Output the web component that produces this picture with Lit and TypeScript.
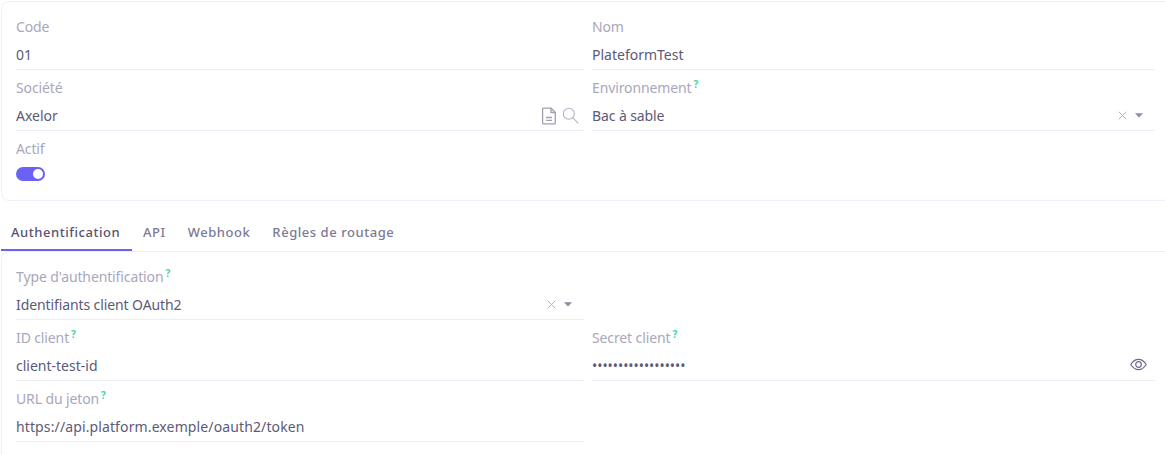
import { LitElement, html, css, nothing } from "lit";
import { customElement } from "lit/decorators.js";

const help = html`<sup class="help">?</sup>`;
const clearAndCaret = html`<span class="icons sel">
  <svg class="x" width="9" height="9" viewBox="0 0 9 9"><path d="M.7.7l7.6 7.6M8.3.7L.7 8.3" stroke="#b5b3c6" stroke-width="1" fill="none"/></svg>
  <svg class="caret" width="8" height="5" viewBox="0 0 8 5"><path d="M0 .3h8L4 4.6z" fill="#8e8ca6"/></svg>
</span>`;

@customElement("app-root")
export class AppRoot extends LitElement {
  static styles = css`
    :host {
      display: block;
      width: 1165px;
      height: 455px;
      overflow: hidden;
      background: #fff;
      font-family: "Noto Sans", "Open Sans", sans-serif;
      font-size: 14px;
      color: #5c5a78;
      box-sizing: border-box;
      padding-top: 1px;
      padding-left: 1px;
    }
    .card {
      border: 1px solid #f1f0fa;
      border-right: none;
      border-radius: 8px 0 0 8px;
      padding: 15px 10px 0 14px;
      display: grid;
      grid-template-columns: 568px 1fr;
      column-gap: 8px;
      row-gap: 8px;
      align-content: start;
    }
    .top { height: 200px; box-sizing: border-box; }
    .bottom { height: 210px; box-sizing: border-box; border-bottom: none; border-radius: 8px 0 0 0; }
    .field { display: flex; flex-direction: column; min-width: 0; }
    .label {
      height: 20px;
      line-height: 20px;
      color: #a9a7bb;
      margin-bottom: 1px;
      white-space: nowrap;
      letter-spacing: -0.12px;
    }
    .help { color: #45d6a4; font-size: 10px; font-weight: 700; line-height: 0; margin-left: 2px; vertical-align: 5px; letter-spacing: 0; }
    .value {
      height: 32px;
      box-sizing: border-box;
      border-bottom: 1px solid #eeedf8;
      display: flex;
      align-items: center;
      justify-content: space-between;
      line-height: 31px;
      padding-top: 2px;
      white-space: nowrap;
    }
    .icons { display: flex; align-items: center; }
    .ref { gap: 5px; margin-right: 5px; }
    .sel { gap: 8px; margin-right: 12px; }
    .eye { margin-right: 8px; margin-top: -2px; }
    .dots { font-size: 13.8px; color: #5c5a78; }
    .url { letter-spacing: 0.12px; }
    .tight { letter-spacing: -0.1px; }
    .toggle {
      width: 29px;
      height: 14px;
      margin-top: 7px;
      border-radius: 7px;
      background: #6a62f5;
      display: flex;
      align-items: center;
      justify-content: flex-end;
      padding-right: 2px;
      box-sizing: border-box;
    }
    .knob { width: 10px; height: 10px; border-radius: 50%; background: #fff; }
    .tabs { display: flex; height: 50px; box-sizing: border-box; font-size: 13px; }
    .tab {
      padding: 0 11px;
      line-height: 62px;
      height: 50px;
      box-sizing: border-box;
      color: #7c7a94;
      font-weight: 500;
      letter-spacing: 0.55px;
      white-space: nowrap;
    }
    .tab.active {
      color: #55536f;
      width: 131px;
      border-bottom: 2px solid #6a62f5;
      padding-left: 10px;
    }
  `;

  private field(label: string, value: unknown, hasHelp = false, icons: unknown = nothing) {
    return html`<div class="field">
      <div class="label">${label}${hasHelp ? help : nothing}</div>
      <div class="value"><span>${value}</span>${icons}</div>
    </div>`;
  }

  render() {
    const refIcons = html`<span class="icons ref">
      <svg width="16" height="18" viewBox="0 0 16 18" fill="none" stroke="#a09eb4" stroke-width="1.3"><path d="M2.5 1.2h7.5l4.3 4.3v10.5a.9.9 0 0 1-.9.9H2.5a.9.9 0 0 1-.9-.9V2.1a.9.9 0 0 1 .9-.9z"/><path d="M10 1.2v4.3h4.3M5 10.5h6M5 13.3h6"/></svg>
      <svg width="17" height="17" viewBox="0 0 17 17" fill="none" stroke="#b3b1c3" stroke-width="1.1"><circle cx="6.8" cy="6.8" r="5.5"/><path d="M10.7 10.7l5.6 5.6"/></svg>
    </span>`;
    const eye = html`<span class="icons eye"><svg width="17" height="13" viewBox="0 0 17 13" fill="none" stroke="#6d6b86" stroke-width="1.2"><path d="M.8 6.5C3 3 5.5 1.3 8.5 1.3S14 3 16.2 6.5C14 10 11.5 11.7 8.5 11.7S3 10 .8 6.5z"/><circle cx="8.5" cy="6.5" r="2.8"/></svg></span>`;
    return html`
      <section class="card top">
        ${this.field("Code", "01")}
        ${this.field("Nom", "PlateformTest")}
        ${this.field("Société", "Axelor", false, refIcons)}
        ${this.field("Environnement", html`<span class="tight">Bac à sable</span>`, true, clearAndCaret)}
        <div class="field">
          <div class="label">Actif</div>
          <div class="toggle"><div class="knob"></div></div>
        </div>
      </section>
      <nav class="tabs">
        <div class="tab active">Authentification</div>
        <div class="tab">API</div>
        <div class="tab">Webhook</div>
        <div class="tab">Règles de routage</div>
      </nav>
      <section class="card bottom">
        ${this.field("Type d'authentification", html`<span class="tight">Identifiants client OAuth2</span>`, true, clearAndCaret)}
        <div></div>
        ${this.field("ID client", "client-test-id", true)}
        ${this.field("Secret client", html`<span class="dots">••••••••••••••••••</span>`, true, eye)}
        ${this.field("URL du jeton", html`<span class="url">https://api.platform.exemple/oauth2/token</span>`, true)}
      </section>
    `;
  }
}
